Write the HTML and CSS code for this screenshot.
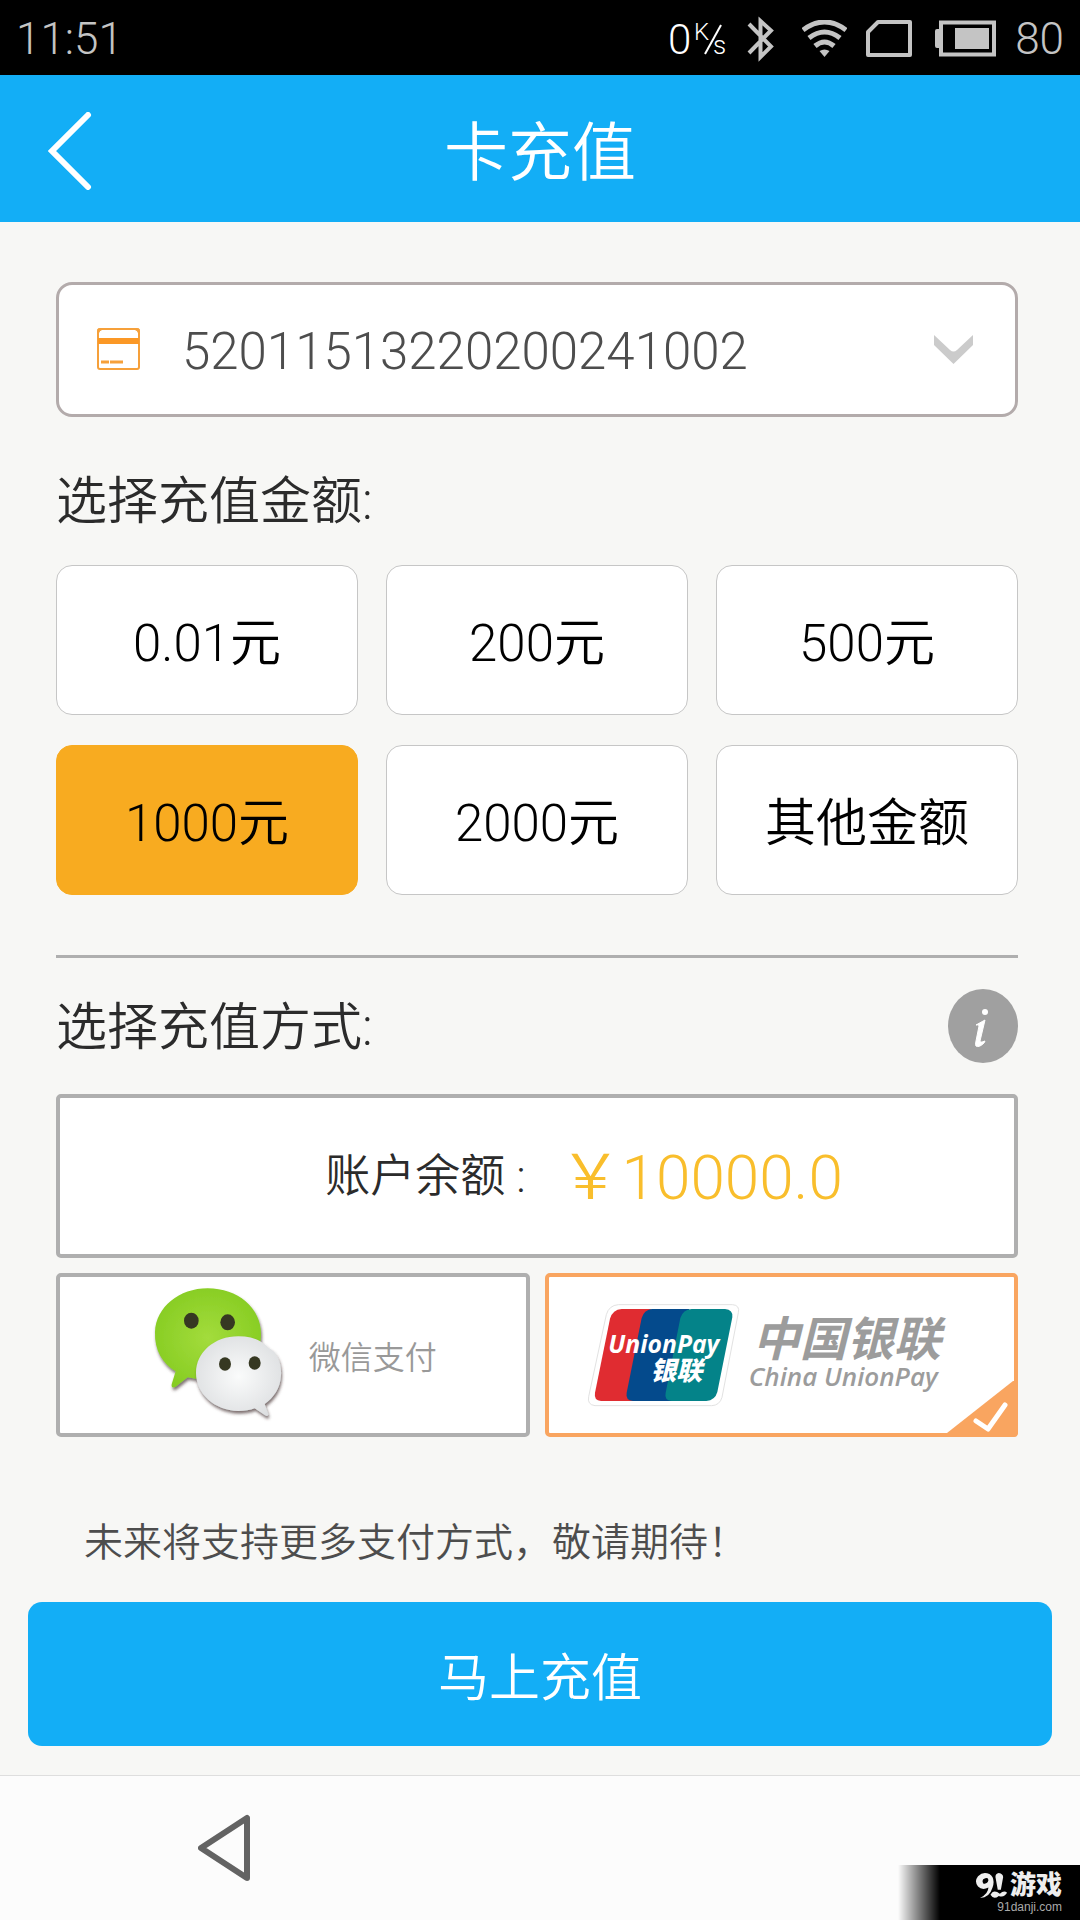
FILE: index.html
```html
<!DOCTYPE html>
<html lang="zh-CN">
<head>
  <meta charset="UTF-8" />
  <meta name="viewport" content="width=device-width, initial-scale=1.0"/>
  <title>卡充值</title>
  <link rel="stylesheet" href="styles.css">
</head>
<body>
  <div class="status-bar">
    <span class="clock">11:51</span>
    <div class="status-icons">
      <svg class="speed" width="62" height="56" viewBox="0 0 62 56" role="img" aria-label="0 K/s">
        <text x="2" y="43" font-size="42">0</text>
        <text x="28" y="29" font-size="24">K</text>
        <text x="47" y="43" font-size="26">s</text>
        <path d="M55 14L39 43" stroke="#fff" stroke-width="2" />
      </svg>
      <svg width="36" height="46" viewBox="0 0 36 46" fill="none" stroke="#c4c4c4" stroke-width="4" aria-hidden="true">
        <path d="M2 8L24 30.500L13.500 41V5L24 14.500L2 37" />
      </svg>
      <svg width="45" height="38" viewBox="0 0 45 38" fill="none" stroke="#c4c4c4" stroke-width="5" aria-hidden="true">
        <path d="M1 10Q22.500 -6 44 10M7 18Q22.500 6 38 18M13 26Q22.500 18 32 26" />
        <path d="M17.500 31Q22.500 28 27.500 31L22.500 37Z" fill="#c4c4c4" stroke="none" />
      </svg>
      <svg width="50" height="38" viewBox="0 0 50 38" fill="none" stroke="#c4c4c4" stroke-width="4" stroke-linejoin="round" aria-hidden="true">
        <path d="M12 2H44V35H2V12Z" />
      </svg>
      <svg width="61" height="38" viewBox="0 0 61 38" aria-hidden="true">
        <rect x="6" y="2.500" width="53" height="32" fill="none" stroke="#c4c4c4" stroke-width="4" />
        <path d="M0 11Q0 9 2 9H5V28H2Q0 28 0 26ZM20 8H54V29H20Z" fill="#c4c4c4" />
      </svg>
      <span class="battery">80</span>
    </div>
  </div>

  <header class="header">
    <button type="button" class="back" aria-label="返回">
      <svg width="44" height="78" viewBox="0 0 44 78" fill="none" stroke="#fff" stroke-width="6" stroke-linecap="round" aria-hidden="true">
        <path d="M40 3L4 39L40 75" />
      </svg>
    </button>
    <h1>卡充值</h1>
  </header>

  <form class="container">
    <div class="card-select">
      <svg width="43" height="43" viewBox="0 0 43 43" aria-hidden="true">
        <rect x="1" y="1" width="41" height="40" rx="2" fill="none" stroke="#f6a03a" stroke-width="2" />
        <path d="M1 6V1H6Q2 2 1 6M42 6V1H37Q41 2 42 6" fill="#f6a03a" stroke="#f6a03a" />
        <path d="M1 10H42V16H1Z" fill="#fb9826" />
        <path d="M4 34H12M13 34H26" stroke="#f6a03a" stroke-width="3" />
      </svg>
      <select id="card" aria-label="卡号">
        <option>52011513220200241002</option>
      </select>
      <svg class="arrow" width="39" height="30" viewBox="0 0 39 30" aria-hidden="true">
        <path d="M0 0L16 15Q19.500 18 23 15L39 0V10L19.500 29L0 10Z" fill="#cbcbcb" />
      </svg>
    </div>

    <fieldset>
      <legend>选择充值金额:</legend>
      <div class="amounts">
        <label class="amount"><input type="radio" name="amount" value="0.01">0.01元</label>
        <label class="amount"><input type="radio" name="amount" value="200">200元</label>
        <label class="amount"><input type="radio" name="amount" value="500">500元</label>
        <label class="amount"><input type="radio" name="amount" value="1000" checked>1000元</label>
        <label class="amount"><input type="radio" name="amount" value="2000">2000元</label>
        <label class="amount"><input type="radio" name="amount" value="other">其他金额</label>
      </div>
    </fieldset>

    <hr>

    <div class="method-title">
      <h2 id="method">选择充值方式:</h2>
      <button type="button" class="info" aria-label="说明">
        <svg width="70" height="74" viewBox="0 0 70 74" aria-hidden="true">
          <ellipse cx="35" cy="37" rx="35" ry="37" fill="#a0a0a0" />
          <circle cx="37" cy="23" r="3" fill="#fff" />
          <path d="M28 36L37 31L32 52Q32 54 37 52L36 54Q31 59 28 57Q27 56 28 52L31 37Q31 35 28 36" fill="#fff" stroke="#fff" stroke-linejoin="round" />
        </svg>
      </button>
    </div>

    <div class="methods" role="radiogroup" aria-labelledby="method">
      <label class="method balance">
        <input type="radio" name="method" value="balance">
        <span>账户余额 :</span>
        <strong>￥10000.0</strong>
      </label>

      <label class="method">
        <input type="radio" name="method" value="wechat">
        <svg width="140" height="145" viewBox="324 68 420 435" aria-hidden="true">
          <defs>
            <radialGradient id="green" cx="0.5" cy="0.5" r="0.6">
              <stop offset="0" stop-color="#a3dc3c" />
              <stop offset="1" stop-color="#84cb20" />
            </radialGradient>
            <radialGradient id="white" cx="0.5" cy="0.5" r="0.6">
              <stop offset="0" stop-color="#fafbfb" />
              <stop offset="1" stop-color="#dcdee0" />
            </radialGradient>
            <filter id="shadow" x="-20%" y="-20%" width="140%" height="140%">
              <feDropShadow dx="3" dy="8" stdDeviation="5" flood-color="#453535" flood-opacity="0.7" />
            </filter>
          </defs>
          <path d="M342 215C345 140 415 84 500 84C590 84 660 142 660 222C660 300 590 358 500 358Q468 358 440 351L404 379Q390 386 392 372L404 333C365 310 340 270 342 215Z" fill="url(#green)" filter="url(#shadow)" />
          <path d="M465 338C465 276 520 228 592 228C630 228 660 238 682 262C710 275 722 310 720 345C718 385 698 412 671 431L682 462Q681 470 672 465L641 444Q620 452 592 452C520 450 465 400 465 338Z" fill="url(#white)" filter="url(#shadow)" />
          <g fill="#363822">
            <ellipse cx="451" cy="181" rx="22" ry="24" />
            <ellipse cx="560" cy="186" rx="22" ry="24" />
            <ellipse cx="552" cy="311" rx="18" ry="20" />
            <ellipse cx="641" cy="308" rx="18" ry="20" />
          </g>
        </svg>
        <span class="wechat-name">微信支付</span>
      </label>

      <label class="method unionpay">
        <input type="radio" name="method" value="unionpay" checked>
        <svg class="unionpay-logo" width="155" height="110" viewBox="165 120 465 330" aria-hidden="true">
          <path d="M262 134H605Q627 136 622 158L573 412Q566 436 542 437H192Q168 434 173 410L226 164Q234 136 262 134Z" fill="#fff" stroke="#e2e2e2" stroke-width="3" />
          <path d="M272 147H360L310 423H210Q188 421 192 398L237 176Q245 149 272 147Z" fill="#e02c31" />
          <path d="M362 147H475L428 423H306Q283 421 287 398L332 174Q339 150 362 147Z" fill="#044a8c" />
          <path d="M482 147H582Q607 149 604 172L559 396Q552 421 526 423H422Q399 421 404 398L448 174Q456 149 482 147Z" fill="#048389" />
          <text class="logo-latin" x="232" y="280">UnionPay</text>
          <text class="logo-cjk" x="358" y="361">银联</text>
        </svg>
        <span class="unionpay-name">
          <b>中国银联</b>
          <i>China UnionPay</i>
        </span>
        <svg class="check" width="71" height="56" viewBox="0 0 71 56" aria-hidden="true">
          <path d="M0 52L66 0H71V52Q71 56 67 56H0Z" fill="#f9a560" />
          <path d="M29 40L41 48L58 24" fill="none" stroke="#fff" stroke-width="5" stroke-linecap="round" stroke-linejoin="round" />
        </svg>
      </label>
    </div>

    <p class="note">未来将支持更多支付方式，敬请期待！</p>
    <button type="submit" class="submit">马上充值</button>
  </form>

  <nav class="nav-bar">
    <button type="button" aria-label="后退">
      <svg width="54" height="68" viewBox="0 0 54 68" fill="none" stroke="#636363" stroke-width="6" stroke-linejoin="round" aria-hidden="true">
        <path d="M3 34L49 4V64Z" />
      </svg>
    </button>
    <div class="watermark">
      <div class="watermark-name">
        <svg width="34" height="27" viewBox="0 0 31 26" aria-hidden="true">
          <path d="M5 25Q13 21 13 15Q7 18 3 14Q-1 9 3 4Q8 -1 14 2Q20 6 17 15Q14 25 5 25M10 6Q6 7 8 11Q12 12 13 8Q13 5 10 6" fill="#eee" fill-rule="evenodd" />
          <path d="M23 1Q28 2 27 6L25 17H22L20 6Q19 2 23 1M15 22Q18 16 24 21Q28 17 31 20Q28 25 23 23Q18 27 15 22" fill="#eee" />
        </svg>
        <span>游戏</span>
      </div>
      <small>91danji.com</small>
    </div>
  </nav>
</body>
</html>
```
FILE: styles.css
```css
:root {
  --blue: #13aef6;
  --orange: #f8ab20;
  --peach: #f9a560;
  --gray: #afafaf;
  --bg: #f7f7f5;
}

* {
  margin: 0;
  padding: 0;
  box-sizing: border-box;
}

body {
  font-family: Roboto, "Noto Sans CJK SC", sans-serif;
  font-weight: 350;
  background: var(--bg);
  color: #2b2b2b;
  display: flex;
  flex-direction: column;
  min-height: 100vh;
}

button,
select {
  font: inherit;
  border: none;
  background: none;
  cursor: pointer;
}

svg {
  display: block;
  flex-shrink: 0;
}

.status-bar {
  display: flex;
  justify-content: space-between;
  align-items: center;
  height: 75px;
  padding: 2px 16px 0;
  background: #000;
  color: #c4c4c4;
  font-size: 44px;
  font-weight: 300;
}

.status-icons {
  display: flex;
  align-items: center;
  gap: 19px;
}

.speed {
  fill: #fff;
}

.header {
  display: grid;
  grid-template-columns: 1fr auto 1fr;
  align-items: center;
  min-height: 147px;
  padding: 4px 48px 0;
  background: var(--blue);
  color: #fff;
}

.header h1 {
  padding-bottom: 8px;
  font-size: 64px;
  font-weight: 350;
}

.back {
  justify-self: start;
}

.container {
  flex: 1;
  padding: 60px 28px 29px;
}

.card-select,
fieldset,
hr,
.method-title,
.methods {
  margin-left: 28px;
  margin-right: 34px;
}

.card-select {
  display: flex;
  align-items: center;
  position: relative;
  height: 135px;
  padding-left: 38px;
  background: #fff;
  border: 3px solid #b3abab;
  border-radius: 16px;
}

.card-select select {
  flex: 1;
  height: 100%;
  padding-top: 4px;
  padding-left: 42px;
  appearance: none;
  color: #4d4d4d;
  font-size: 51px;
}

.card-select .arrow {
  position: absolute;
  right: 42px;
  pointer-events: none;
}

fieldset {
  border: none;
  margin-top: 52px;
}

legend,
h2 {
  font-size: 51px;
  font-weight: 350;
  line-height: 66px;
}

.amounts {
  display: grid;
  grid-template-columns: repeat(3, 1fr);
  gap: 30px 28px;
  margin-top: 30px;
}

.amount {
  display: flex;
  align-items: center;
  justify-content: center;
  height: 150px;
  padding-bottom: 2px;
  background: #fff;
  border: 1px solid #c6c6c6;
  border-radius: 16px;
  color: #000;
  font-size: 51px;
  cursor: pointer;
}

.amount:has(:checked) {
  background: var(--orange);
  border-color: var(--orange);
}

.amount input,
.method input {
  position: absolute;
  opacity: 0;
}

hr {
  height: 3px;
  margin-top: 60px;
  border: none;
  background: var(--gray);
}

.method-title {
  display: flex;
  align-items: center;
  justify-content: space-between;
  margin-top: 31px;
  margin-bottom: 31px;
}

.method-title h2 {
  padding-top: 4px;
}

.methods {
  display: grid;
  grid-template-columns: 1fr 1fr;
  gap: 15px;
}

.method {
  display: flex;
  align-items: center;
  justify-content: center;
  gap: 20px;
  position: relative;
  height: 164px;
  background: #fff;
  border: 4px solid var(--gray);
  border-radius: 5px;
  cursor: pointer;
}

.method:has(:checked) {
  border-color: var(--peach);
}

.balance {
  grid-column: 1 / -1;
  gap: 34px;
  padding-bottom: 8px;
  padding-left: 94px;
  font-size: 45px;
}

.balance strong {
  color: #f9be2c;
  font-size: 62px;
  font-weight: 350;
}

.wechat-name {
  color: #999;
  font-size: 32px;
}

.unionpay {
  gap: 8px;
  padding-right: 36px;
}

.unionpay-logo text {
  fill: #fff;
  font-style: italic;
}

.logo-latin {
  font-family: "Open Sans", sans-serif;
  font-size: 74px;
  font-weight: 700;
}

.logo-cjk {
  font-family: "Noto Sans CJK SC", sans-serif;
  font-size: 78px;
  font-weight: 900;
}

.unionpay-name {
  display: flex;
  flex-direction: column;
  padding-top: 2px;
  color: #9c9c9c;
  font-style: italic;
}

.unionpay-name b {
  font-size: 47px;
  font-weight: 700;
  line-height: 40px;
  padding-left: 4px;
}

.unionpay-name i {
  font-family: "Open Sans", sans-serif;
  font-size: 26px;
  font-weight: 600;
  line-height: 32px;
}

.check {
  display: none;
  position: absolute;
  right: -4px;
  bottom: -4px;
}

.method :checked ~ .check {
  display: block;
}

.note {
  margin: 76px 56px 29px;
  color: #4d4d4d;
  font-size: 39px;
  line-height: 60px;
}

.submit {
  width: 100%;
  height: 144px;
  background: var(--blue);
  border-radius: 14px;
  color: #fff;
  font-size: 51px;
}

.nav-bar {
  display: flex;
  align-items: center;
  position: relative;
  height: 145px;
  padding-left: 198px;
  background: #fcfcfc;
  border-top: 1px solid #dedede;
}

.watermark {
  display: flex;
  flex-direction: column;
  align-items: flex-end;
  position: absolute;
  right: 0;
  bottom: 0;
  width: 182px;
  height: 55px;
  padding: 7px 18px 0;
  background: linear-gradient(to right, transparent, #000 42px);
  color: #eee;
}

.watermark-name {
  display: flex;
  align-items: center;
  gap: 2px;
  font-size: 26px;
  font-weight: 900;
  line-height: 27px;
}

.watermark small {
  color: #aaa;
  font-family: "Liberation Sans", sans-serif;
  font-size: 12px;
  font-weight: 400;
  line-height: 16px;
}
```
